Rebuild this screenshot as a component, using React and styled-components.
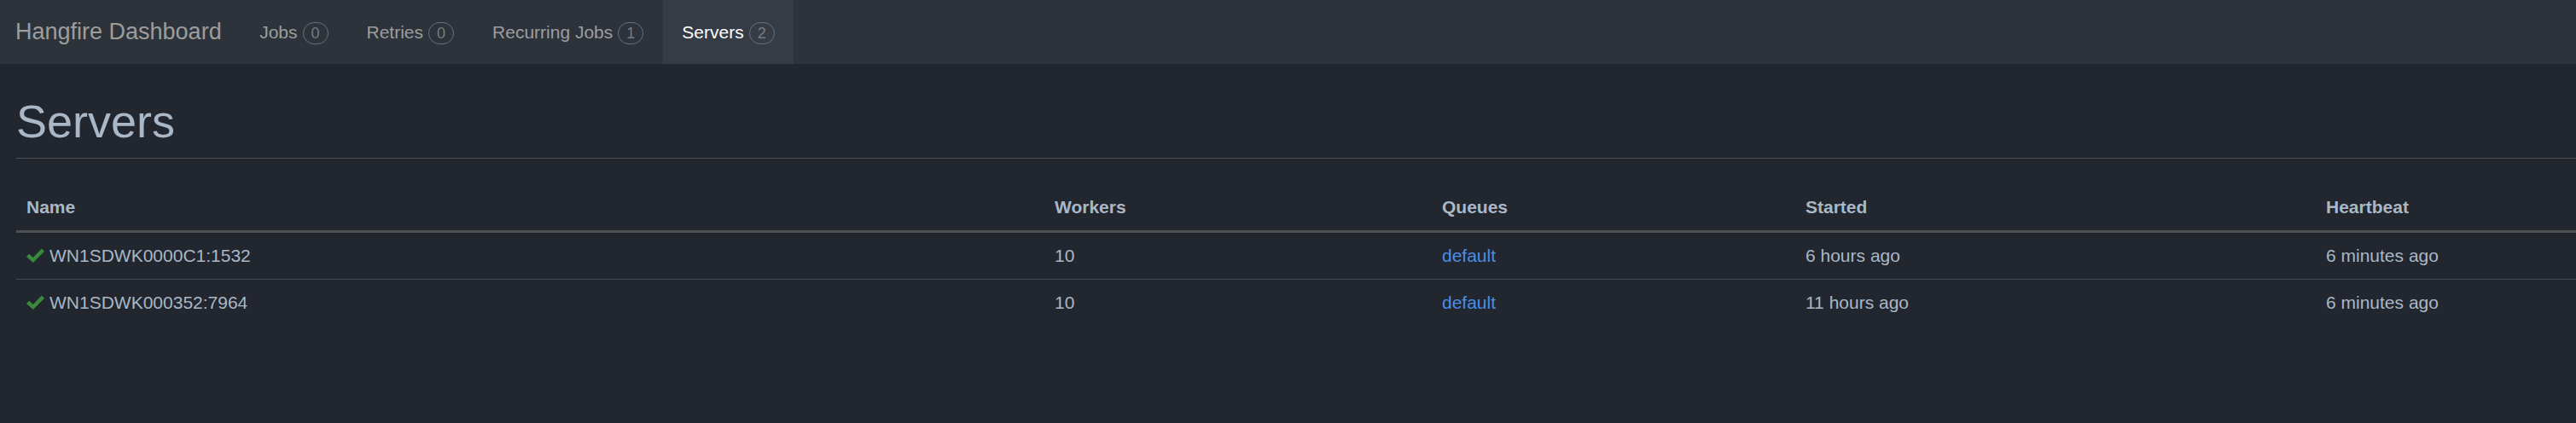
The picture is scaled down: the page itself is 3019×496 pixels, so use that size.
import React from 'react';
import styled, { createGlobalStyle } from 'styled-components';

const GlobalStyle = createGlobalStyle`
  html, body {
    margin: 0;
    padding: 0;
    background: #22262e;
    font-family: "Liberation Sans", Arial, sans-serif;
  }
  * { box-sizing: border-box; }
`;

const servers = [
  { name: 'WN1SDWK0000C1:1532', workers: 10, queue: 'default', started: '6 hours ago', heartbeat: '6 minutes ago' },
  { name: 'WN1SDWK000352:7964', workers: 10, queue: 'default', started: '11 hours ago', heartbeat: '6 minutes ago' },
];

const navItems = [
  { label: 'Jobs', count: 0 },
  { label: 'Retries', count: 0 },
  { label: 'Recurring Jobs', count: 1 },
  { label: 'Servers', count: 2, active: true },
];

// column widths, they add up to the 3000px of the table
const columns = [
  { title: 'Name', width: 1205 },
  { title: 'Workers', width: 454 },
  { title: 'Queues', width: 426 },
  { title: 'Started', width: 610 },
  { title: 'Heartbeat', width: 305 },
];

function CheckIcon() {
  return (
    <Check viewBox="0 0 21 17" width="21" height="17">
      <path d="M0 10 L3.2 6.8 L7.8 11 L17.8 0.6 L21 3.8 L7.8 17 Z" fill="#3a8a3d" />
    </Check>
  );
}

export default function App() {
  return (
    <React.Fragment>
      <GlobalStyle />
      <Page>
        <Navbar>
          <Brand>Hangfire Dashboard</Brand>
          {navItems.map((item) => (
            <NavItem key={item.label} $active={item.active}>
              {item.label}
              <Badge>{item.count}</Badge>
            </NavItem>
          ))}
        </Navbar>
        <Content>
          <PageHeader>
            <Title>Servers</Title>
          </PageHeader>
          <Table>
            <thead>
              <tr>
                {columns.map((c) => (
                  <Th key={c.title} $w={c.width}>{c.title}</Th>
                ))}
              </tr>
            </thead>
            <tbody>
              {servers.map((s) => (
                <tr key={s.name}>
                  <Td>
                    <NameCell>
                      <CheckIcon />
                      {s.name}
                    </NameCell>
                  </Td>
                  <Td>{s.workers}</Td>
                  <Td><QueueLink>{s.queue}</QueueLink></Td>
                  <Td>{s.started}</Td>
                  <Td>{s.heartbeat}</Td>
                </tr>
              ))}
            </tbody>
          </Table>
        </Content>
      </Page>
    </React.Fragment>
  );
}

const Page = styled.div`
  min-height: 100vh;
  background: #22262e;
`;

const Navbar = styled.nav`
  display: flex;
  align-items: stretch;
  height: 75px;
  background: #2d333b;
`;

const Brand = styled.div`
  display: flex;
  align-items: center;
  padding: 0 22px 0 18px;
  font-size: 27px;
  color: #9d9d9d;
`;

const NavItem = styled.div`
  display: flex;
  align-items: center;
  padding: 0 22.5px;
  font-size: 21px;
  color: ${(p) => (p.$active ? '#ffffff' : '#9d9d9d')};
  background: ${(p) => (p.$active ? '#363c46' : 'transparent')};
`;

const Badge = styled.span`
  display: inline-flex;
  align-items: center;
  justify-content: center;
  height: 26px;
  min-width: 30px;
  margin-left: 6px;
  margin-top: 3px;
  padding: 0 8px;
  border: 1px solid #6b6f75;
  border-radius: 15px;
  font-size: 18px;
  color: #777b80;
`;

const Content = styled.main`
  padding-left: 19px;
`;

const PageHeader = styled.div`
  padding-top: 38px;
  padding-bottom: 13px;
  border-bottom: 1px solid #4d4f52;
  margin-bottom: 30px;
`;

const Title = styled.h1`
  margin: 0;
  font-size: 54px;
  font-weight: 400;
  line-height: 1.1;
  color: #a9b7c6;
`;

const Table = styled.table`
  width: 100%;
  table-layout: fixed;
  border-collapse: collapse;
  font-size: 21px;
  line-height: 30px;
  color: #a9b7c6;
`;

const Th = styled.th`
  width: ${(p) => p.$w}px;
  padding: 12px;
  text-align: left;
  font-weight: 700;
  border-bottom: 3px solid #4f5052;
`;

const Td = styled.td`
  padding: 12px;
  border-bottom: 1px solid #45484c;
  white-space: nowrap;

  tbody tr:last-child & {
    border-bottom: none;
  }
`;

const NameCell = styled.div`
  display: flex;
  align-items: center;
  height: 30px;
`;

const Check = styled.svg`
  margin-right: 6px;
  margin-top: -1px;
  flex-shrink: 0;
`;

const QueueLink = styled.a`
  color: #4a8fe7;
  text-decoration: none;
  cursor: pointer;
`;
